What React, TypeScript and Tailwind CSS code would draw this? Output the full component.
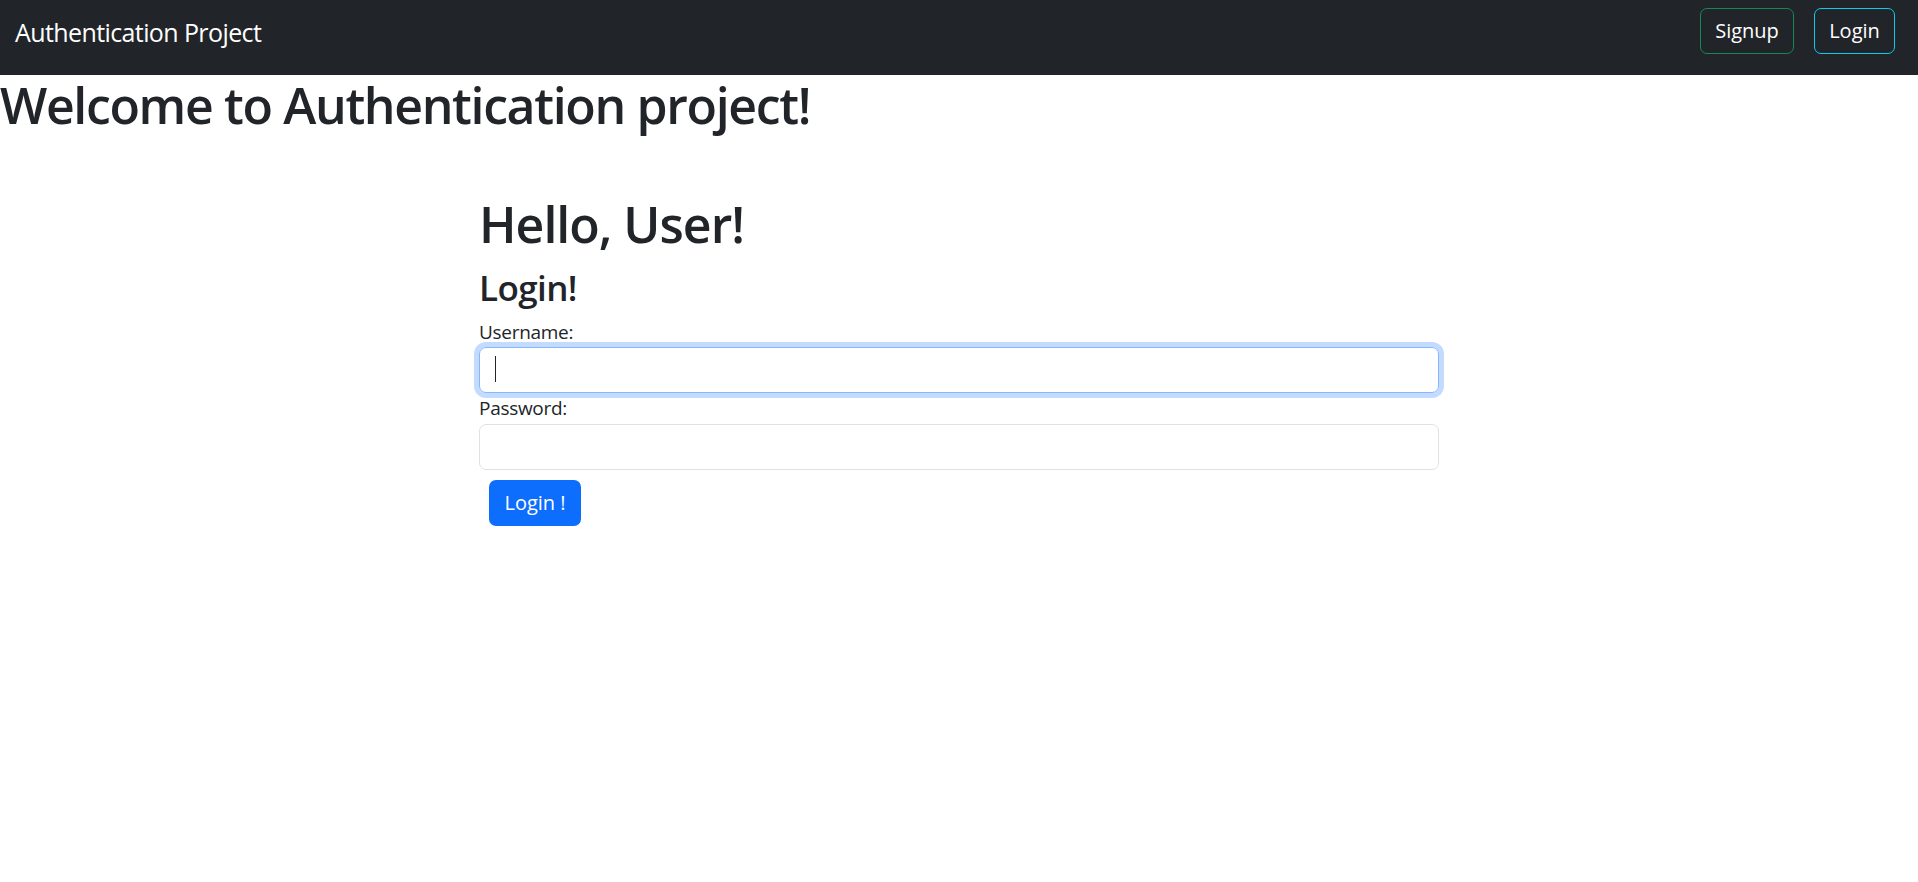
import React, { useState } from 'react';

const font = "font-['Open_Sans','Noto_Sans',sans-serif]";

const Navbar: React.FC = () => (
  <nav className="flex h-[75px] items-start justify-between bg-[#212529] pl-[15px] pr-[23px] pt-[8px]">
    <a href="#" className="text-[25px] leading-[48px] tracking-[-0.6px] text-white">
      Authentication Project
    </a>
    <div className="flex items-center gap-[20px]">
      <button className="h-[46px] w-[94px] rounded-[7px] border border-[#198754] text-[20px] leading-[30px] text-white">
        Signup
      </button>
      <button className="h-[46px] w-[81px] rounded-[7px] border border-[#0dcaf0] text-[20px] leading-[30px] text-white">
        Login
      </button>
    </div>
  </nav>
);

const LoginForm: React.FC = () => {
  const [username, setUsername] = useState('');
  const [password, setPassword] = useState('');

  return (
    <div className="mx-auto mt-[49px] w-[960px]">
      <h1 className="mb-[13px] text-[50px] font-semibold leading-[60px] tracking-[-1px]">Hello, User!</h1>
      <h3 className="mb-[8px] text-[35px] font-semibold leading-[42px] tracking-[-0.6px]">Login!</h3>
      <form onSubmit={(e) => e.preventDefault()}>
        <label className="block text-[19px] leading-[30px] tracking-[-0.3px]">Username:</label>
        <div className="relative">
          <input
            value={username}
            onChange={(e) => setUsername(e.target.value)}
            className="block h-[46px] w-full rounded-[7px] border border-[#86b7fe] px-[15px] text-[20px] shadow-[0_0_0_5px_#c2dbfe] outline-none"
          />
          {username === '' && (
            <span className="pointer-events-none absolute left-[16px] top-[9px] h-[26px] w-px bg-[#212529]" />
          )}
        </div>
        <label className="block text-[19px] leading-[31px] tracking-[-0.3px]">Password:</label>
        <input
          type="password"
          value={password}
          onChange={(e) => setPassword(e.target.value)}
          className="block h-[46px] w-full rounded-[7px] border border-[#dee2e6] px-[15px] text-[20px] outline-none"
        />
        <button
          type="submit"
          className="ml-[10px] mt-[10px] h-[46px] w-[92px] rounded-[7px] bg-[#0d6efd] text-[20px] leading-[30px] text-white"
        >
          Login !
        </button>
      </form>
    </div>
  );
};

export default function App() {
  return (
    <div className={`flex min-h-screen flex-col bg-white text-[#212529] ${font}`}>
      <Navbar />
      <h1 className="mb-[10px] text-[50px] font-semibold leading-[60px] tracking-[-1.35px]">
        Welcome to Authentication project!
      </h1>
      <LoginForm />
    </div>
  );
}
